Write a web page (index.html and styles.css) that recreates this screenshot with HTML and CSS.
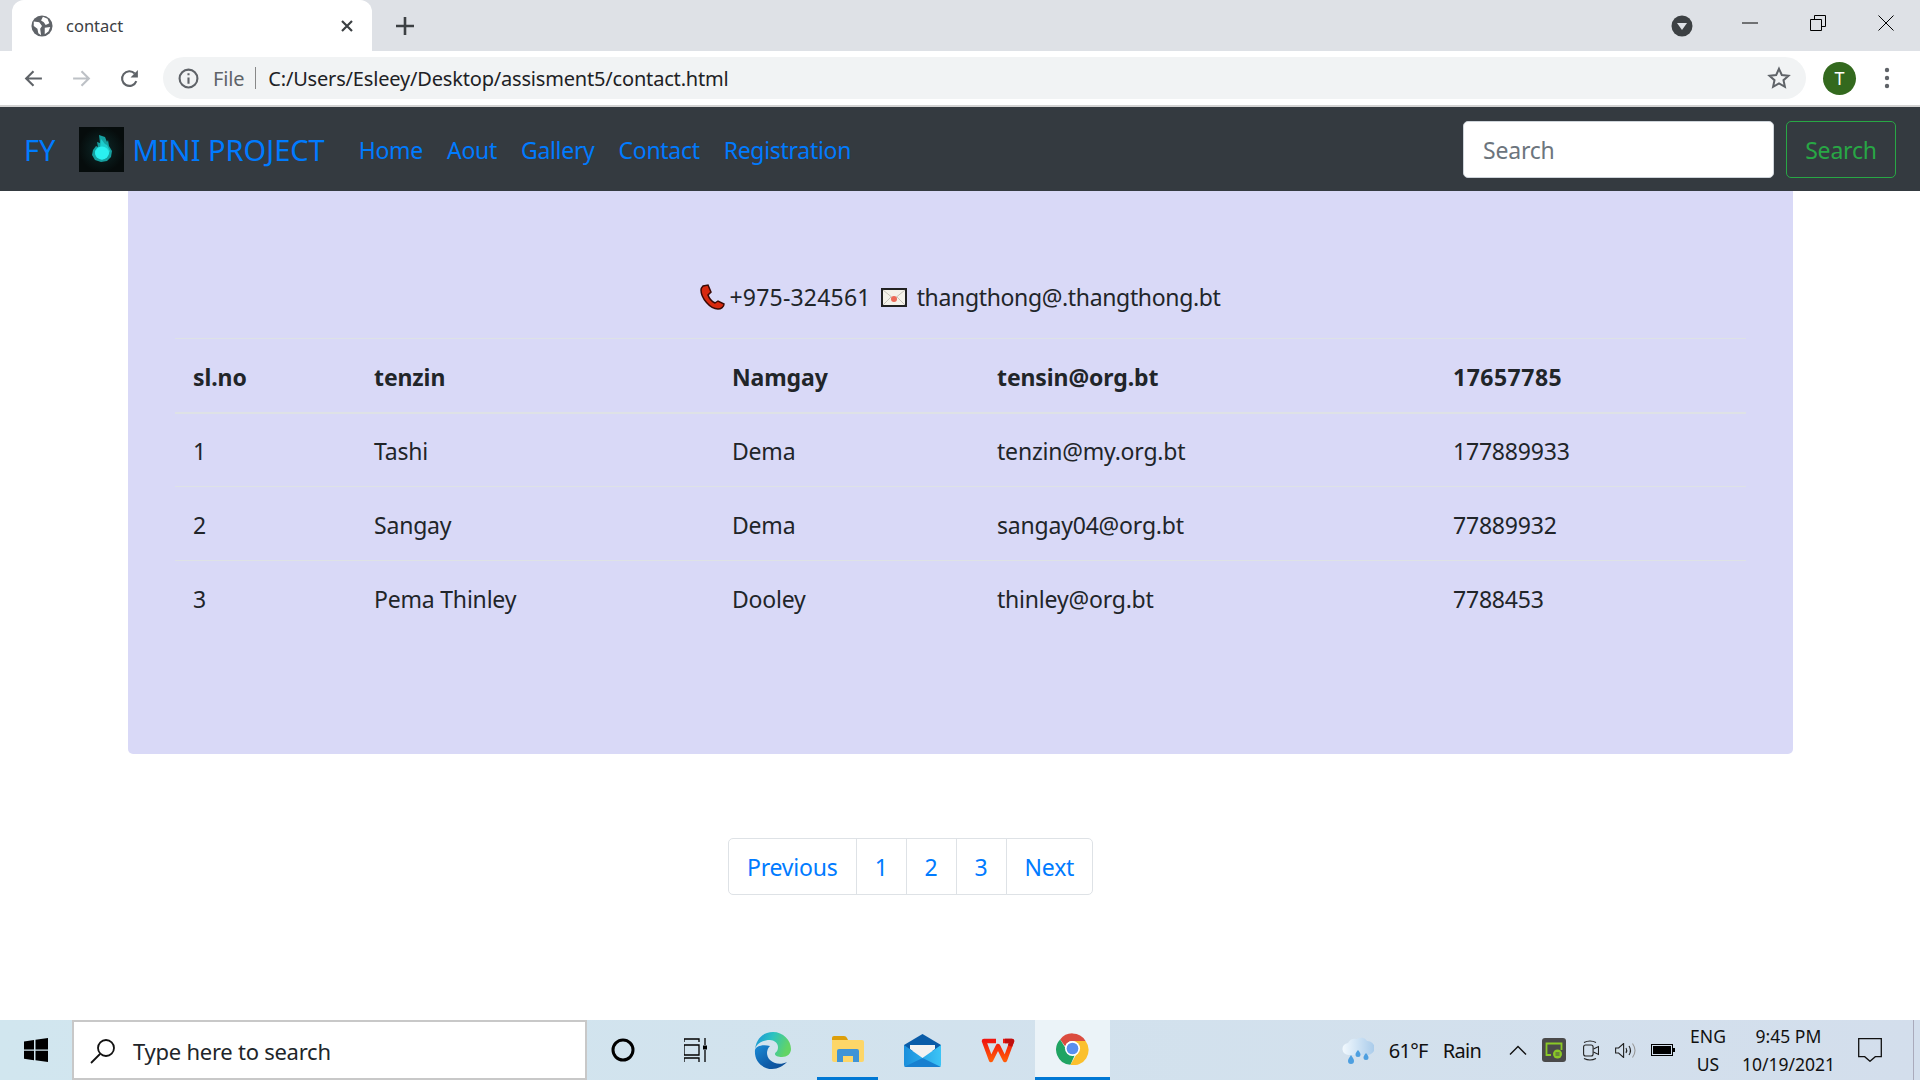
FILE: index.html
```html
<!DOCTYPE html>
<html lang="en">
<head>
  <meta charset="UTF-8" />
  <title>contact</title>
  <link rel="stylesheet" href="styles.css">
</head>
<body>

<div class="tabstrip">
  <div class="tab">
    <svg class="favicon" viewBox="0 0 24 24"><circle cx="12" cy="12" r="11.500" fill="#5f6368"/><path d="M3 7l6 1 3 4-2 3 1 7-3-2-1-5-4-3zM13 2l5 2 2 5-4 2-2-3-3-2zM15 14l6-1-2 5-4 3z" fill="#fff"/></svg>
    <span class="tab-title">contact</span>
    <svg class="tab-close" viewBox="0 0 12 12"><path d="M1 1l10 10M11 1L1 11" stroke="#3c4043" stroke-width="2.200"/></svg>
  </div>
  <svg class="tab-new" viewBox="0 0 18 18"><path d="M9 0v18M0 9h18" stroke="#3c4043" stroke-width="2.600"/></svg>
  <div class="spacer"></div>
  <svg class="tab-search" viewBox="0 0 22 22"><circle cx="11" cy="11" r="10.500" fill="#3c4043"/><path d="M6 8h10l-5 7z" fill="#dee1e6"/></svg>
  <div class="win-btn"><svg width="16" height="2" viewBox="0 0 16 2"><path d="M0 1h16" stroke="#000" stroke-width="1"/></svg></div>
  <div class="win-btn"><svg width="16" height="16" viewBox="0 0 16 16" fill="none"><path d="M.5 4.500h11v11H.5zM4.500 4V.5h11v11H12" stroke="#000"/></svg></div>
  <div class="win-btn"><svg width="16" height="16" viewBox="0 0 16 16"><path d="M.5.5l15 15M15.500.5l-15 15" stroke="#000"/></svg></div>
</div>

<div class="toolbar">
  <svg class="tool-icon" viewBox="0 0 20 20" fill="none"><path d="M18 10H3M10 3l-7 7 7 7" stroke="#5f6368" stroke-width="2"/></svg>
  <svg class="tool-icon" viewBox="0 0 20 20" fill="none"><path d="M2 10h15M10 3l7 7-7 7" stroke="#bdc1c6" stroke-width="2"/></svg>
  <svg class="tool-icon" viewBox="0 0 20 20" fill="none"><path d="M16.500 12.500A7 7 0 1 1 15 5.200" stroke="#5f6368" stroke-width="2"/><path d="M18 2v7h-7z" fill="#5f6368"/></svg>
  <div class="omnibox">
    <svg class="info-icon" viewBox="0 0 20 20" fill="none"><circle cx="10" cy="10" r="8.500" stroke="#5f6368" stroke-width="2"/><path d="M10 9v6M10 5v2" stroke="#5f6368" stroke-width="2"/></svg>
    <span class="url-file">File</span>
    <span class="url-sep"></span>
    <span class="url-text">C:/Users/Esleey/Desktop/assisment5/contact.html</span>
    <div class="spacer"></div>
    <svg class="star" viewBox="0 0 24 24" fill="none"><path d="M12 2.800l2.800 6.200 6.700.7-5 4.500 1.400 6.600-5.900-3.400-5.900 3.400 1.400-6.600-5-4.500 6.700-.7z" stroke="#5f6368" stroke-width="2"/></svg>
  </div>
  <div class="avatar">T</div>
  <svg class="dots" viewBox="0 0 6 22"><circle cx="3" cy="3" r="2.200" fill="#5f6368"/><circle cx="3" cy="11" r="2.200" fill="#5f6368"/><circle cx="3" cy="19" r="2.200" fill="#5f6368"/></svg>
</div>

<nav class="navbar">
  <a href="#" class="brand brand-fy">FY</a>
  <svg class="logo" viewBox="0 0 45 45">
    <defs><radialGradient id="logoBg"><stop offset="0" stop-color="#0d2a2a"/><stop offset="1" stop-color="#060c0c"/></radialGradient></defs>
    <rect width="45" height="45" fill="url(#logoBg)"/>
    <path d="M20 8l6 2 2 5 1-2 1 6 3 5-1 6-4 4-6 1-6-2-3-5 1-5 3-4 2 1-1-5 3 1z" fill="#15a0a0"/>
    <path d="M22 12l4 5 2 1 3 6-3 6-5 3-6-3-1-6 3-4 2 1z" fill="#1ccccc"/>
    <ellipse cx="23" cy="26" rx="7" ry="6.500" fill="#2af0f0"/>
  </svg>
  <a href="#" class="brand">MINI PROJECT</a>
  <ul class="nav-links">
    <li><a href="#">Home</a></li>
    <li><a href="#">Aout</a></li>
    <li><a href="#">Gallery</a></li>
    <li><a href="#">Contact</a></li>
    <li><a href="#">Registration</a></li>
  </ul>
  <form class="nav-search">
    <input type="text" placeholder="Search" />
    <button type="button">Search</button>
  </form>
</nav>

<main class="page">
  <div class="panel">
    <p class="contact-line">
      <svg class="phone" viewBox="0 0 26 26"><path d="M3 2l5-1 3 7-3 3c1 3 3 6 7 8l3-2 6 3c0 3-3 5-6 5C10 25 1 14 1 6c0-2 1-3 2-4z" fill="#d8290f" stroke="#3a0a05" stroke-width="1.500"/></svg>
      <span class="phone-number">+975-324561</span>
      <svg class="envelope" viewBox="0 0 26 19"><rect x="1" y="1" width="24" height="17" fill="#f5f2ea" stroke="#222" stroke-width="2"/><path d="M2 2l11 9 11-9M2 17l8-8M24 17l-8-8" fill="none" stroke="#c9c4ba"/><circle cx="13" cy="11" r="3" fill="#ec6a58"/></svg>
      <span class="email">thangthong@.thangthong.bt</span>
    </p>
    <table class="contact-table">
      <thead>
        <tr><th>sl.no</th><th>tenzin</th><th>Namgay</th><th>tensin@org.bt</th><th>17657785</th></tr>
      </thead>
      <tbody>
        <tr><td>1</td><td>Tashi</td><td>Dema</td><td>tenzin@my.org.bt</td><td>177889933</td></tr>
        <tr><td>2</td><td>Sangay</td><td>Dema</td><td>sangay04@org.bt</td><td>77889932</td></tr>
        <tr><td>3</td><td>Pema Thinley</td><td>Dooley</td><td>thinley@org.bt</td><td>7788453</td></tr>
      </tbody>
    </table>
  </div>
  <ul class="pagination">
    <li><a href="#">Previous</a></li>
    <li><a href="#">1</a></li>
    <li><a href="#">2</a></li>
    <li><a href="#">3</a></li>
    <li><a href="#">Next</a></li>
  </ul>
</main>

<footer class="taskbar">
  <div class="start">
    <svg width="24" height="24" viewBox="0 0 24 24"><path d="M0 3.500l10-1.500v9.500H0zM11.500 1.800L24 0v11.500H11.500zM0 12.800h10v9.400L0 20.700zM11.500 12.800H24V24l-12.500-1.800z" fill="#000"/></svg>
  </div>
  <div class="task-search">
    <svg class="magnifier" viewBox="0 0 26 26" fill="none"><circle cx="16" cy="10" r="8" stroke="#111" stroke-width="1.800"/><path d="M10 16L1 25" stroke="#111" stroke-width="1.800"/></svg>
    <span>Type here to search</span>
  </div>
  <div class="task-item cortana"><svg width="24" height="24" viewBox="0 0 24 24" fill="none"><circle cx="12" cy="12" r="10" stroke="#000" stroke-width="3"/></svg></div>
  <div class="task-item taskview"><svg width="23" height="24" viewBox="0 0 23 24" fill="none" stroke="#000" stroke-width="1.300"><path d="M0 4V1h15v3M0 7h15v10H0zM0 24v-4h15v4M21 0v7M21 12v12"/><rect x="19" y="7.500" width="4" height="4" fill="#000" stroke="none"/></svg></div>
  <div class="task-item">
    <svg width="37" height="37" viewBox="0 0 37 37">
      <defs>
        <linearGradient id="edgeTop" x1="0" x2="1" y1="0" y2="0.300"><stop offset="0" stop-color="#1a8fdc"/><stop offset=".5" stop-color="#2cc3c0"/><stop offset="1" stop-color="#63d465"/></linearGradient>
        <linearGradient id="edgeLow" x1="0" x2="1" y1="0" y2="1"><stop offset="0" stop-color="#1a8bd6"/><stop offset=".6" stop-color="#0e5ca8"/><stop offset="1" stop-color="#0d4a92"/></linearGradient>
      </defs>
      <path d="M1 18C2 7 9 0 19 0c10 0 18 8 18 17 0 5-4 8-9 8-4 0-7-1-7-3s3-2 3-7c0-4-4-7-8-7C8 8 2 12 1 18z" fill="url(#edgeTop)"/>
      <path d="M1 18C0 29 8 37 18 37c6 0 11-3 15-7-6 3-13 2-17-2-4-4-4-10 0-14-7-2-14 0-15 4z" fill="url(#edgeLow)"/>
    </svg>
  </div>
  <div class="task-item running explorer">
    <svg width="32" height="26" viewBox="0 0 32 26">
      <path d="M0 2q0-2 2-2h10q2 0 3 2l1 2H0z" fill="#dd9f0a"/>
      <path d="M0 4h30q2 0 2 2v18q0 2-2 2H2q-2 0-2-2z" fill="#fdd668"/>
      <path d="M5 26V15q0-2 2-2h18q2 0 2 2v11h-6v-6H11v6z" fill="#3f94d6"/>
    </svg>
  </div>
  <div class="task-item">
    <svg width="37" height="33" viewBox="0 0 37 33">
      <defs><linearGradient id="mailBody" x1="0" x2="1" y1="0" y2="0"><stop offset="0" stop-color="#1a8fdc"/><stop offset="1" stop-color="#3cc4f6"/></linearGradient></defs>
      <path d="M0 11L18.500 0 37 11v6H0z" fill="#0a5ca8"/>
      <path d="M6 11h25v4l-12.500 9L6 15z" fill="#f2f2f2"/>
      <path d="M0 11l18.500 13L37 11v20q0 2-2 2H2q-2 0-2-2z" fill="url(#mailBody)"/>
      <path d="M0 33l18.500-9L37 33z" fill="#1880d0"/>
    </svg>
  </div>
  <div class="task-item">
    <svg width="34" height="25" viewBox="0 0 34 25" fill="none">
      <defs><linearGradient id="wps" x1="0" x2="0" y1="0" y2="1"><stop offset="0" stop-color="#f0160f"/><stop offset="1" stop-color="#ff5a08"/></linearGradient></defs>
      <path d="M15 3H3l7 19 7-14 7 14 7-19h-9" stroke="url(#wps)" stroke-width="4.500" stroke-linejoin="round"/>
      <path d="M24 3h7l-2 5" stroke="#bf0f0f" stroke-width="4.500" stroke-linejoin="round"/>
    </svg>
  </div>
  <div class="task-item running active">
    <svg width="33" height="33" viewBox="0 0 48 48">
      <path d="M24 2a22 22 0 0 1 19 11H24a11 11 0 0 0-10.500 8L6 11a22 22 0 0 1 18-9z" fill="#db4c3f"/>
      <path d="M6 11l10 16a11 11 0 0 0 11 7l-6 13.800A22 22 0 0 1 6 11z" fill="#1fa463"/>
      <path d="M43 13a22 22 0 0 1-22 34.800L31 30a11 11 0 0 0-7-17z" fill="#fbc02d"/>
      <circle cx="24" cy="24" r="11" fill="#fff"/>
      <circle cx="24" cy="24" r="8.500" fill="#5a8fee"/>
    </svg>
  </div>
  <div class="spacer"></div>
  <div class="tray">
    <svg class="weather" viewBox="0 0 32 28">
      <defs><linearGradient id="cloud" x1="0" x2="1" y1="0" y2="0"><stop offset="0" stop-color="#f2f9fe"/><stop offset="1" stop-color="#a9cbea"/></linearGradient></defs>
      <path d="M7 19a6 6 0 0 1-1-12 8 8 0 0 1 9-4 7 7 0 0 1 10 2 7 7 0 0 1 1 14z" fill="url(#cloud)"/>
      <path d="M9 19c2 3 3 4 3 6a3 3 0 0 1-6 0c0-2 1-3 3-6zM16 14c1.500 2 2.500 3 2.500 4.500a2.500 2.500 0 0 1-5 0c0-1.500 1-2.500 2.500-4.500zM24 17c1.500 2 2.500 3 2.500 4.500a2.500 2.500 0 0 1-5 0c0-1.500 1-2.500 2.500-4.500z" fill="#4d9fe0"/>
    </svg>
    <span class="temp">61°F</span>
    <span class="rain">Rain</span>
    <svg class="chevron" viewBox="0 0 18 10" fill="none"><path d="M1 9.500l8-8 8 8" stroke="#111" stroke-width="1.400"/></svg>
    <svg class="tray-app" viewBox="0 0 24 24"><rect width="24" height="24" rx="3" fill="#4a4a4a"/><path d="M9 17H4.500V5.500h15V12" fill="none" stroke="#8ac926" stroke-width="1.800"/><circle cx="15.500" cy="16" r="4.500" fill="#8ac926"/><path d="M13.500 15h4M17.500 17h-4" stroke="#4a4a4a" stroke-width="1"/></svg>
    <svg class="tray-meet" viewBox="0 0 16 21" fill="none" stroke="#222" stroke-width="1.100"><path d="M1 2.500q6-3 12 0M1 18.500q6 3 12 0"/><rect x=".6" y="5" width="9.500" height="11" rx="2"/><path d="M10.500 9l5-2.500v8l-5-2.500"/></svg>
    <svg class="tray-sound" viewBox="0 0 22 15" fill="none" stroke="#222" stroke-width="1.100"><path d="M.6 5h3l5-4.500v14l-5-4.500h-3z"/><path d="M11 5q1.500 2.500 0 5M14 3q3 4.500 0 9"/><path d="M17.500 .5q5 7 0 14" stroke="#999"/></svg>
    <svg class="tray-battery" viewBox="0 0 24 12"><rect x=".5" y=".5" width="21" height="11" fill="none" stroke="#000"/><rect x="2" y="2" width="18" height="8" fill="#000"/><rect x="22" y="4" width="2" height="4" fill="#000"/></svg>
    <div class="tray-stack lang"><span>ENG</span><span>US</span></div>
    <div class="tray-stack clock"><span>9:45 PM</span><span>10/19/2021</span></div>
    <svg class="notify" viewBox="0 0 24 24" fill="none"><path d="M.7.7h22.600v18h-6l-5.300 4.600-5.300-4.600h-6z" stroke="#111" stroke-width="1.300"/></svg>
    <span class="show-desktop"></span>
  </div>
</footer>

</body>
</html>
```

FILE: styles.css
```css
* {
  box-sizing: border-box;
}
body {
  font-family: "Noto Sans", "Open Sans", sans-serif;
  margin: 0;
  width: 1920px;
  height: 1080px;
  overflow: hidden;
  background: white;
  color: #212529;
  display: flex;
  flex-direction: column;
}
a {
  color: #007bff;
  text-decoration: none;
}
.spacer {
  flex: 1;
}

/* browser chrome */
.tabstrip {
  height: 51px;
  background: #dee1e6;
  display: flex;
  align-items: center;
  padding-left: 12px;
}
.tab {
  width: 360px;
  height: 51px;
  background: white;
  border-radius: 12px 12px 0 0;
  display: flex;
  align-items: center;
  padding: 0 19px 0 19px;
}
.favicon {
  width: 22px;
  height: 22px;
}
.tab-title {
  font-size: 16.5px;
  margin-left: 13px;
  flex: 1;
  color: #3c4043;
}
.tab-close {
  width: 12px;
  height: 12px;
}
.tab-new {
  width: 18px;
  height: 18px;
  margin-left: 24px;
}
.tab-search {
  width: 22px;
  height: 22px;
  margin-right: 23px;
}
.win-btn {
  width: 68px;
  display: flex;
  justify-content: center;
  margin-bottom: 6px;
}
.toolbar {
  height: 56px;
  background: white;
  border-bottom: 2px solid #d3d3d3;
  display: flex;
  align-items: center;
  padding-left: 23px;
}
.tool-icon {
  width: 21px;
  height: 21px;
  margin-right: 27px;
}
.omnibox {
  width: 1643px;
  height: 42px;
  margin-left: -4px;
  border-radius: 21px;
  background: #f1f3f4;
  display: flex;
  align-items: center;
  padding: 0 15px 0 17px;
  font-size: 20px;
  letter-spacing: -0.18px;
}
.info-icon {
  width: 21px;
  height: 21px;
  margin-left: -2px;
}
.url-file {
  color: #5f6368;
  margin-left: 14px;
}
.url-sep {
  width: 1px;
  height: 22px;
  background: #888;
  margin: 0 12px 0 11px;
}
.url-text {
  color: #202124;
}
.star {
  width: 24px;
  height: 24px;
}
.avatar {
  width: 33px;
  height: 33px;
  border-radius: 50%;
  background: #33691e;
  color: white;
  font-size: 18px;
  display: flex;
  align-items: center;
  justify-content: center;
  margin-left: 17px;
}
.dots {
  width: 6px;
  height: 22px;
  margin-left: 28px;
}

/* navbar */
.navbar {
  height: 84px;
  background: #343a40;
  display: flex;
  align-items: center;
  padding: 0 24px;
}
.brand {
  font-size: 29px;
}
.brand-fy {
  margin-right: 24px;
}
.logo {
  width: 45px;
  height: 45px;
  margin-right: 8px;
}
.nav-links {
  list-style: none;
  display: flex;
  flex: 1;
  gap: 24px;
  margin: 2px 0 0 34px;
  padding: 0;
  font-size: 23px;
  letter-spacing: -0.3px;
}
.nav-search {
  display: flex;
  gap: 12px;
}
.nav-search input {
  width: 311px;
  height: 57px;
  font: inherit;
  font-size: 23px;
  letter-spacing: -0.2px;
  padding: 2px 19px 0;
  border: 1px solid #ced4da;
  border-radius: 5px;
  background: white;
}
.nav-search input::placeholder {
  color: #6c757d;
}
.nav-search button {
  width: 110px;
  height: 57px;
  font: inherit;
  font-size: 23px;
  letter-spacing: -0.2px;
  padding: 2px 0 0;
  color: #28a745;
  background: transparent;
  border: 1px solid #28a745;
  border-radius: 5px;
}

/* page */
.page {
  flex: 1;
  display: flex;
  flex-direction: column;
  align-items: flex-start;
}
.panel {
  width: 1665px;
  height: 563px;
  margin-left: 128px;
  background: #d9d9f7;
  border-radius: 0 0 5px 5px;
  padding: 88px 47px 0;
}
.contact-line {
  margin: 0;
  height: 59px;
  display: flex;
  justify-content: center;
  align-items: flex-start;
  font-size: 23px;
  line-height: 36px;
}
.phone {
  width: 26px;
  height: 26px;
  margin: 5px 3px 0 0;
}
.phone-number {
  letter-spacing: 0.2px;
}
.email {
  letter-spacing: -0.35px;
}
.envelope {
  width: 26px;
  height: 19px;
  margin: 9px 10px 0 10px;
}
.contact-table {
  width: 100%;
  border-collapse: collapse;
  font-size: 23px;
  letter-spacing: -0.2px;
  table-layout: fixed;
}
.contact-table th,
.contact-table td {
  text-align: left;
  padding: 3px 18px 0;
  height: 74px;
  border-top: 1px solid #dee2e6;
}
.contact-table th {
  border-bottom: 2px solid #dee2e6;
  letter-spacing: -0.1px;
}
.contact-table th:last-child {
  letter-spacing: 0.5px;
}
.contact-table th:nth-child(1) { width: 181px; }
.contact-table th:nth-child(2) { width: 358px; }
.contact-table th:nth-child(3) { width: 265px; }
.contact-table th:nth-child(4) { width: 456px; }
.pagination {
  list-style: none;
  display: flex;
  margin: 84px 0 0 728px;
  padding: 0;
  font-size: 23px;
  letter-spacing: -0.2px;
}
.pagination a {
  display: block;
  height: 57px;
  line-height: 57px;
  padding: 0 18px;
  background: white;
  border: 1px solid #dee2e6;
  margin-left: -1px;
}
.pagination li:first-child a {
  margin-left: 0;
  border-radius: 5px 0 0 5px;
}
.pagination li:last-child a {
  border-radius: 0 5px 5px 0;
  padding: 0 18px 0 18px;
}

/* windows taskbar */
.taskbar {
  height: 60px;
  background: linear-gradient(90deg, #d1e6ef, #d3deec);
  display: flex;
  align-items: center;
  padding-right: 6px;
}
.start {
  width: 72px;
  display: flex;
  justify-content: center;
}
.task-search {
  width: 515px;
  height: 60px;
  background: white;
  border: 2px solid #c8c8c8;
  display: flex;
  align-items: center;
  padding: 2px 0 0 16px;
  font-size: 22px;
  letter-spacing: -0.25px;
}
.magnifier {
  width: 26px;
  height: 26px;
  margin-right: 17px;
}
.task-item {
  width: 75px;
  height: 60px;
  display: flex;
  align-items: center;
  justify-content: center;
}
.cortana {
  width: 72px;
}
.taskview {
  width: 73px;
  margin-right: 3px;
}
.explorer {
  width: 61px;
  margin: 0 7px;
}
.running {
  border-bottom: 3px solid #0078d4;
}
.active {
  background: #ebf3f8;
}
.tray {
  display: flex;
  align-items: center;
  font-size: 20px;
  letter-spacing: -0.7px;
  color: #111;
}
.weather {
  width: 32px;
  height: 28px;
}
.temp {
  margin-left: 15px;
}
.rain {
  margin-left: 15px;
}
.chevron {
  width: 18px;
  height: 10px;
  margin-left: 28px;
}
.tray-app {
  width: 24px;
  height: 24px;
  margin-left: 15px;
}
.tray-meet {
  width: 16px;
  height: 21px;
  margin-left: 17px;
}
.tray-sound {
  width: 22px;
  height: 15px;
  margin-left: 16px;
}
.tray-battery {
  width: 24px;
  height: 12px;
  margin-left: 14px;
}
.tray-stack {
  display: flex;
  flex-direction: column;
  align-items: center;
  font-size: 17.5px;
  letter-spacing: 0;
  line-height: 28px;
}
.lang {
  margin-left: 15px;
}
.clock {
  margin-left: 16px;
}
.notify {
  width: 24px;
  height: 24px;
  margin-left: 23px;
}
.show-desktop {
  width: 1px;
  height: 60px;
  background: #aab;
  margin-left: 31px;
}
```
